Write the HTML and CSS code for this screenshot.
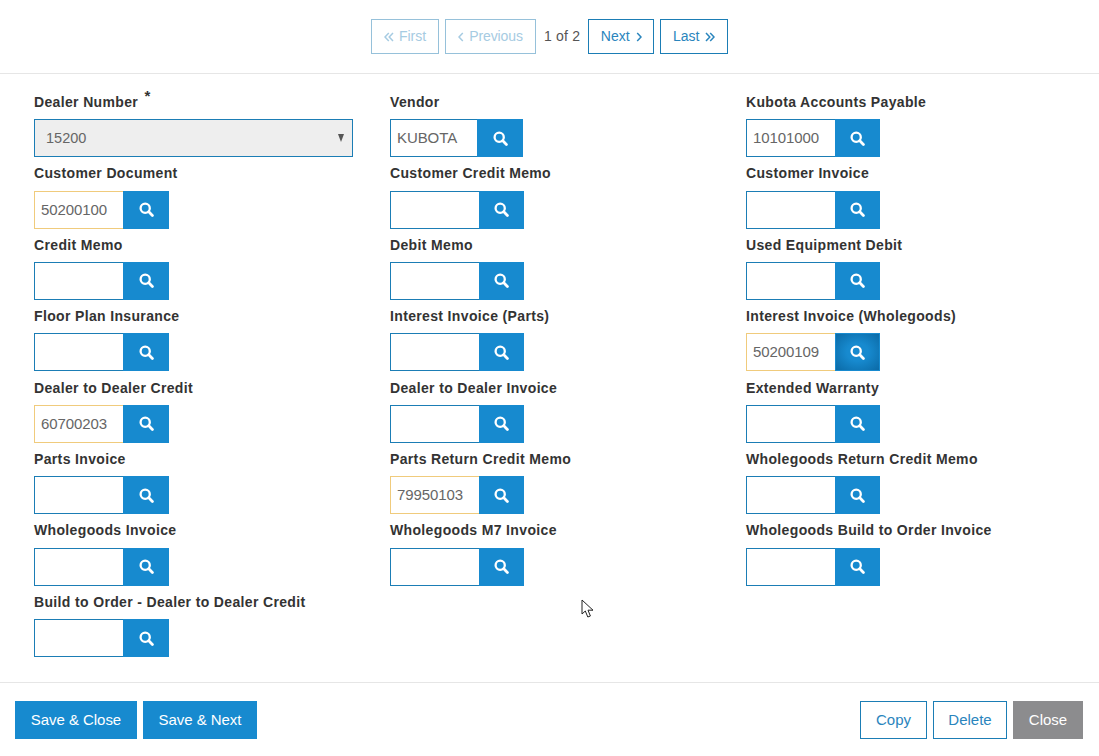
FILE: index.html
```html
<!DOCTYPE html>
<html lang="en">
<head>
<meta charset="utf-8">
<title>Dealer Accounts</title>
<link rel="stylesheet" href="styles.css">
</head>
<body>
<svg class="sprite" width="0" height="0" aria-hidden="true">
  <symbol id="search" viewBox="0 0 15 15">
    <circle cx="6.2" cy="6.2" r="4.6" fill="none" stroke="currentColor" stroke-width="2.3"/>
    <path d="M9.8 9.8 L13.4 13.4" fill="none" stroke="currentColor" stroke-width="2.8" stroke-linecap="round"/>
  </symbol>
  <symbol id="chev-left" viewBox="0 0 6 10">
    <path d="M4.8 1 L1 5 L4.8 9" fill="none" stroke="currentColor" stroke-width="1.5"/>
  </symbol>
  <symbol id="chev-right" viewBox="0 0 6 10">
    <path d="M1.2 1 L5 5 L1.2 9" fill="none" stroke="currentColor" stroke-width="1.5"/>
  </symbol>
  <symbol id="dbl-left" viewBox="0 0 10 10">
    <path d="M4.8 1 L1 5 L4.8 9 M9 1 L5.2 5 L9 9" fill="none" stroke="currentColor" stroke-width="1.5"/>
  </symbol>
  <symbol id="dbl-right" viewBox="0 0 10 10">
    <path d="M1 1 L4.8 5 L1 9 M5.2 1 L9 5 L5.2 9" fill="none" stroke="currentColor" stroke-width="1.5"/>
  </symbol>
</svg>
<div class="page">
  <header class="pager">
    <button class="btn outline disabled pg-first"><svg class="chev dbl"><use href="#dbl-left"/></svg>First</button>
    <button class="btn outline disabled pg-prev"><svg class="chev"><use href="#chev-left"/></svg>Previous</button>
    <span class="count">1 of 2</span>
    <button class="btn outline pg-next">Next<svg class="chev"><use href="#chev-right"/></svg></button>
    <button class="btn outline pg-last">Last<svg class="chev dbl"><use href="#dbl-right"/></svg></button>
  </header>
  <main class="form">
    <div class="field">
      <label class="label">Dealer Number <sup class="req">*</sup></label>
      <div class="select"><span>15200</span><span class="caret"></span></div>
    </div>
    <div class="field">
      <label class="label">Vendor</label>
      <div class="lookup narrow"><div class="input">KUBOTA</div><button class="search"><svg class="icon"><use href="#search"/></svg></button></div>
    </div>
    <div class="field">
      <label class="label">Kubota Accounts Payable</label>
      <div class="lookup"><div class="input">10101000</div><button class="search"><svg class="icon"><use href="#search"/></svg></button></div>
    </div>

    <div class="field">
      <label class="label">Customer Document</label>
      <div class="lookup"><div class="input warn">50200100</div><button class="search"><svg class="icon"><use href="#search"/></svg></button></div>
    </div>
    <div class="field">
      <label class="label">Customer Credit Memo</label>
      <div class="lookup"><div class="input"></div><button class="search"><svg class="icon"><use href="#search"/></svg></button></div>
    </div>
    <div class="field">
      <label class="label">Customer Invoice</label>
      <div class="lookup"><div class="input"></div><button class="search"><svg class="icon"><use href="#search"/></svg></button></div>
    </div>

    <div class="field">
      <label class="label">Credit Memo</label>
      <div class="lookup"><div class="input"></div><button class="search"><svg class="icon"><use href="#search"/></svg></button></div>
    </div>
    <div class="field">
      <label class="label">Debit Memo</label>
      <div class="lookup"><div class="input"></div><button class="search"><svg class="icon"><use href="#search"/></svg></button></div>
    </div>
    <div class="field">
      <label class="label">Used Equipment Debit</label>
      <div class="lookup"><div class="input"></div><button class="search"><svg class="icon"><use href="#search"/></svg></button></div>
    </div>

    <div class="field">
      <label class="label">Floor Plan Insurance</label>
      <div class="lookup"><div class="input"></div><button class="search"><svg class="icon"><use href="#search"/></svg></button></div>
    </div>
    <div class="field">
      <label class="label">Interest Invoice (Parts)</label>
      <div class="lookup"><div class="input"></div><button class="search"><svg class="icon"><use href="#search"/></svg></button></div>
    </div>
    <div class="field">
      <label class="label">Interest Invoice (Wholegoods)</label>
      <div class="lookup"><div class="input warn">50200109</div><button class="search focused"><svg class="icon"><use href="#search"/></svg></button></div>
    </div>

    <div class="field">
      <label class="label">Dealer to Dealer Credit</label>
      <div class="lookup"><div class="input warn">60700203</div><button class="search"><svg class="icon"><use href="#search"/></svg></button></div>
    </div>
    <div class="field">
      <label class="label">Dealer to Dealer Invoice</label>
      <div class="lookup"><div class="input"></div><button class="search"><svg class="icon"><use href="#search"/></svg></button></div>
    </div>
    <div class="field">
      <label class="label">Extended Warranty</label>
      <div class="lookup"><div class="input"></div><button class="search"><svg class="icon"><use href="#search"/></svg></button></div>
    </div>

    <div class="field">
      <label class="label">Parts Invoice</label>
      <div class="lookup"><div class="input"></div><button class="search"><svg class="icon"><use href="#search"/></svg></button></div>
    </div>
    <div class="field">
      <label class="label">Parts Return Credit Memo</label>
      <div class="lookup"><div class="input warn">79950103</div><button class="search"><svg class="icon"><use href="#search"/></svg></button></div>
    </div>
    <div class="field">
      <label class="label">Wholegoods Return Credit Memo</label>
      <div class="lookup"><div class="input"></div><button class="search"><svg class="icon"><use href="#search"/></svg></button></div>
    </div>

    <div class="field">
      <label class="label">Wholegoods Invoice</label>
      <div class="lookup"><div class="input"></div><button class="search"><svg class="icon"><use href="#search"/></svg></button></div>
    </div>
    <div class="field">
      <label class="label">Wholegoods M7 Invoice</label>
      <div class="lookup"><div class="input"></div><button class="search"><svg class="icon"><use href="#search"/></svg></button></div>
    </div>
    <div class="field">
      <label class="label">Wholegoods Build to Order Invoice</label>
      <div class="lookup"><div class="input"></div><button class="search"><svg class="icon"><use href="#search"/></svg></button></div>
    </div>

    <div class="field">
      <label class="label">Build to Order - Dealer to Dealer Credit</label>
      <div class="lookup"><div class="input"></div><button class="search"><svg class="icon"><use href="#search"/></svg></button></div>
    </div>
  </main>
  <footer class="actions">
    <div class="group">
      <button class="btn solid save-close">Save &amp; Close</button>
      <button class="btn solid save-next">Save &amp; Next</button>
    </div>
    <div class="group">
      <button class="btn outline copy">Copy</button>
      <button class="btn outline delete">Delete</button>
      <button class="btn grey close">Close</button>
    </div>
  </footer>
</div>
<svg class="cursor" width="14" height="20" viewBox="0 0 14 20" aria-hidden="true">
  <path d="M1 1 L1 15 L4.3 12 L6.8 18 L9.4 17 L7 11.2 L12 11.2 Z" fill="#fff" stroke="#222" stroke-width="1"/>
</svg>
</body>
</html>
```

FILE: styles.css
```css
* { box-sizing: border-box; }
html, body { margin: 0; padding: 0; background: #fff; }
body {
  width: 1099px;
  height: 756px;
  overflow: hidden;
  position: relative;
  font-family: "Liberation Sans", Arial, sans-serif;
  font-size: 14px;
  color: #555;
}
.sprite { position: absolute; }
.page { display: flex; flex-direction: column; height: 756px; }

.btn {
  font-family: inherit;
  font-size: 14px;
  border: 1px solid transparent;
  background: #fff;
  padding: 0 0 2px;
  margin: 0;
  white-space: nowrap;
}
.outline { border-color: #1b7db5; color: #2a85bd; }
.solid { background: #178acf; color: #fff; font-size: 15px; letter-spacing: -0.05px; }
.grey { background: #8c8c8e; color: #fff; font-size: 15px; }
.disabled { border-color: #96c1da; color: #a6cbe2; }

.chev { width: 6px; height: 10px; display: inline-block; vertical-align: -1px; }
.chev.dbl { width: 10px; }
.pg-first .chev, .pg-prev .chev { margin-right: 5px; }
.pg-next .chev, .pg-last .chev { margin-left: 6px; }
.pg-prev { letter-spacing: -0.1px; }

.pager {
  height: 74px;
  flex: none;
  border-bottom: 1px solid #e6e6e6;
  display: flex;
  align-items: flex-start;
  padding: 19px 0 0 371px;
  gap: 6px;
}
.pager .btn { height: 35px; }
.count { flex: none; line-height: 34px; font-size: 14px; letter-spacing: 0.2px; margin: 0 2px; color: #555; }
.pg-first { width: 68px; }
.pg-prev { width: 91px; }
.pg-next { width: 66px; }
.pg-last { width: 68px; }

.form {
  flex: 1;
  display: grid;
  grid-template-columns: 356px 356px 1fr;
  grid-auto-rows: 71.43px;
  padding: 12px 0 0 34px;
  align-content: start;
}
.field { display: flex; flex-direction: column; }
.label {
  display: block;
  height: 33.15px;
  padding-top: 7.85px;
  font-size: 14px;
  line-height: 16px;
  font-weight: 700;
  color: #333;
  letter-spacing: 0.35px;
}
.req { font-size: 15px; line-height: 0; vertical-align: super; margin-left: 2px; }

.select {
  width: 319px;
  height: 38px;
  border: 1px solid #1b7db5;
  background: #eeeeee;
  display: flex;
  justify-content: space-between;
  align-items: center;
  padding: 0 8px 0 11px;
  color: #666;
  font-size: 14.5px;
}
.caret {
  width: 0;
  height: 0;
  border-left: 3.5px solid transparent;
  border-right: 3.5px solid transparent;
  border-top: 8px solid #555;
}

.lookup { display: flex; height: 38px; }
.input {
  width: 89px;
  height: 38px;
  border: 1px solid #1b7db5;
  border-right: 0;
  background: #fff;
  padding: 0 0 0 6px;
  line-height: 36px;
  font-size: 15px;
  letter-spacing: -0.08px;
  color: #666;
}
.narrow .input { width: 87px; }
.input.warn { border-color: #f0cb7c; border-right: 0; }
.search {
  width: 45px;
  height: 38px;
  border: 0;
  padding: 0;
  background: #178acf;
  color: #fff;
  display: flex;
  align-items: center;
  justify-content: center;
}
.field:nth-child(3n+1) .search, .narrow .search { width: 46px; }
.search.focused {
  background: radial-gradient(ellipse at center, #178acf 35%, #0b6aa6 100%);
  border: 1px solid #178acf;
}
.icon { width: 15px; height: 15px; display: block; }

.actions {
  flex: none;
  height: 74px;
  border-top: 1px solid #e6e6e6;
  display: flex;
  justify-content: space-between;
  padding: 18px 16px 0 15px;
}
.group { display: flex; gap: 6px; }
.actions .btn { height: 38px; }
.actions .outline { font-size: 15px; }
.save-close { width: 122px; }
.save-next { width: 114px; }
.copy { width: 67px; }
.delete { width: 74px; }
.close { width: 70px; }

.cursor { position: absolute; left: 581px; top: 599px; }
```
